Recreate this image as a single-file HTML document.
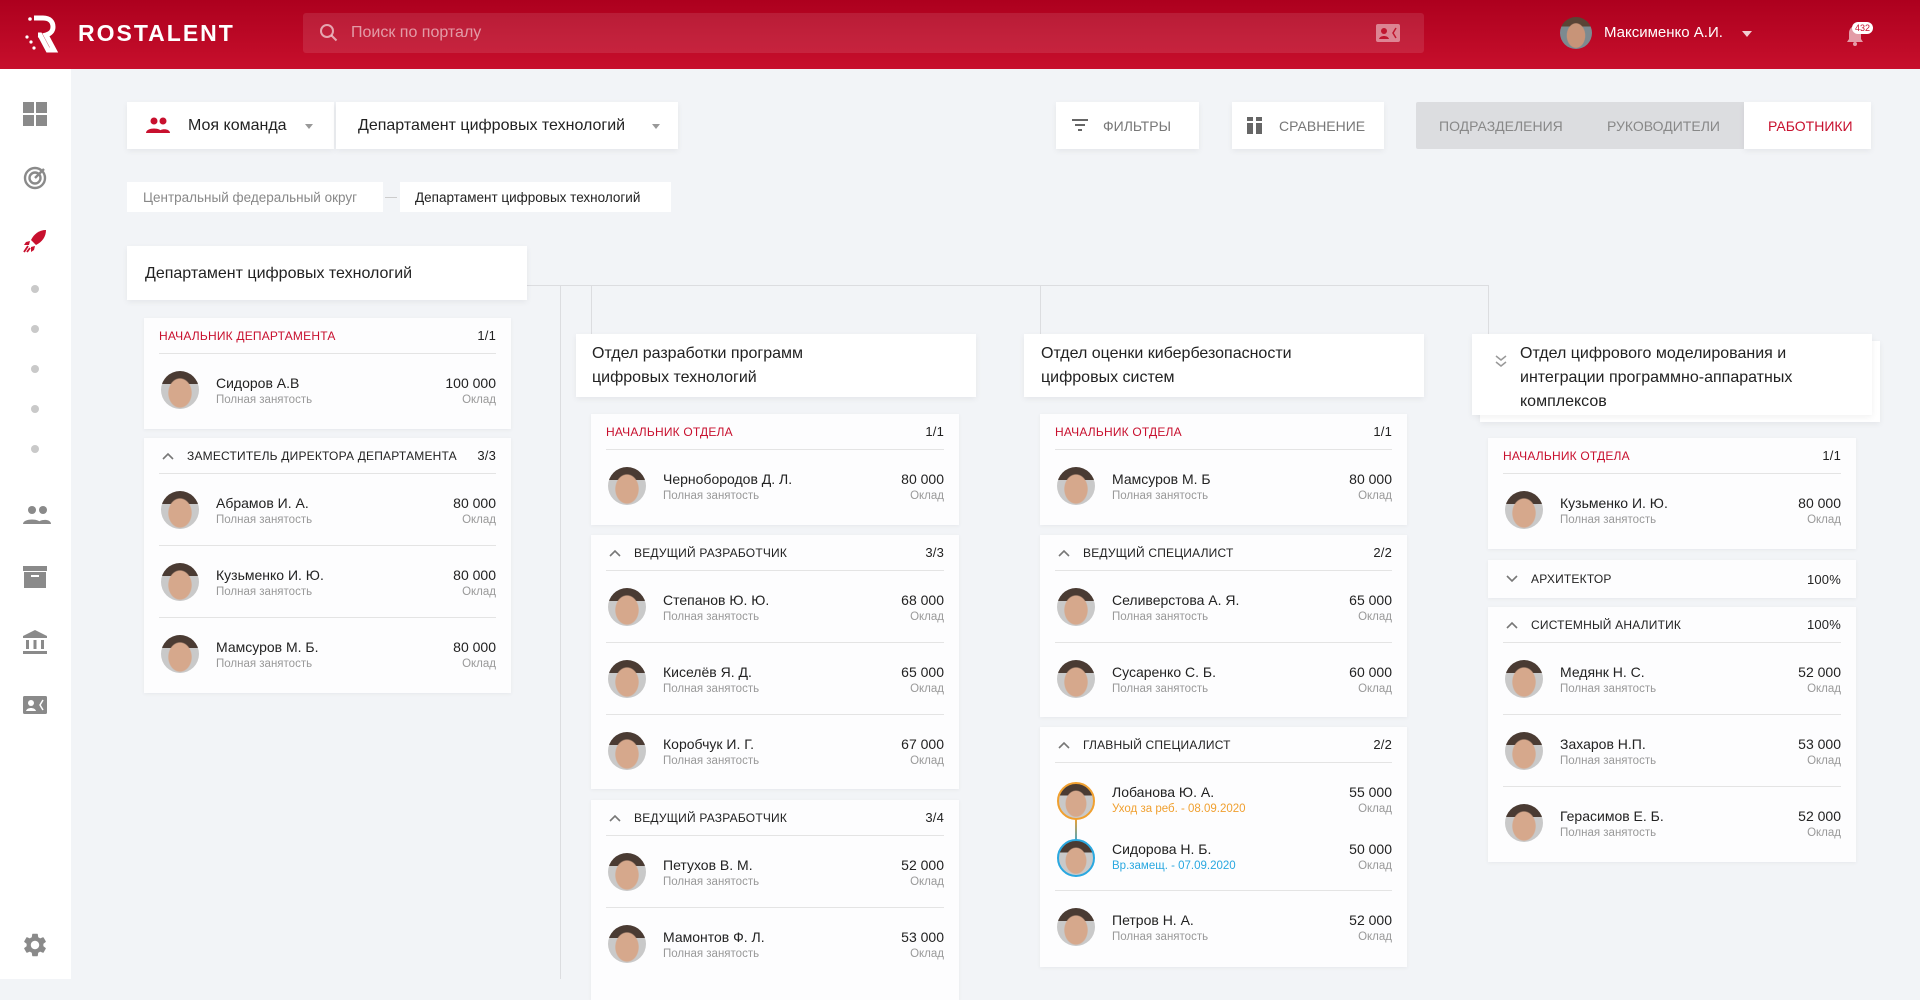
<!DOCTYPE html>
<html><head><meta charset="utf-8">
<style>
*{box-sizing:border-box;margin:0;padding:0}
body{width:1920px;height:979px;overflow:hidden;background:#f2f4f7;font-family:"Liberation Sans","Noto Sans CJK SC",sans-serif;color:#222;position:relative}
.hdr{position:absolute;left:0;top:0;width:1920px;height:69px;background:linear-gradient(180deg,#ad001e,#c70f2c)}
.logo{position:absolute;left:78px;top:20px;color:#fff;font-weight:bold;font-size:23px;letter-spacing:2px}
.search{position:absolute;left:303px;top:13px;width:1121px;height:40px;background:rgba(255,255,255,.1);border-radius:3px}
.search span{position:absolute;left:48px;top:11px;color:rgba(255,255,255,.55);font-size:16px}
.side{position:absolute;left:0;top:69px;width:71px;height:910px;background:#fff}
.ico{position:absolute;left:23px}
.dot{position:absolute;left:31px;width:8px;height:8px;border-radius:50%;background:#c9c9c9}
.box{position:absolute;background:#fff;box-shadow:0 2px 6px rgba(0,0,0,.06)}
.card{position:absolute;background:#fdfdfe;box-shadow:0 1px 4px rgba(0,0,0,.05)}
.sh{height:36px;margin:0 15px;border-bottom:1px solid #e4e4e4;display:flex;align-items:center;font-size:12px;text-transform:uppercase;letter-spacing:.2px}
.sh .t{flex:1}
.sh .c{font-size:13px}
.red{color:#c8102e}
.chev{width:28px;padding-left:3px;display:flex;align-items:center}
.row{height:72px;margin:0 15px;position:relative;border-bottom:1px solid #e4e4e4}
.row:last-child{border-bottom:none}
.av{position:absolute;left:2px;top:17px;width:38px;height:38px;border-radius:50%;background:radial-gradient(ellipse 32% 40% at 50% 58%,#d6a88c 92%,transparent 100%),linear-gradient(#4a3b33 0 34%,#c9c9c9 34%)}
.nm{position:absolute;left:57px;top:21px;font-size:14px;color:#222}
.sb{position:absolute;left:57px;top:40px;font-size:11.5px;color:#999}
.am{position:absolute;right:0;top:21px;font-size:14px}
.ok{position:absolute;right:0;top:40px;font-size:11.5px;color:#999}
.ln{position:absolute;background:#dcdde0}
.dh{position:absolute;font-size:16px;line-height:24px}
</style></head><body>
<div class="hdr">
  <svg style="position:absolute;left:24px;top:15px" width="36" height="38" viewBox="0 0 36 38"><path d="M10 3h9c7 0 10 4 10 9 0 4-3 7-7 8l8 15h-6l-8-15h-2" fill="none" stroke="#fff" stroke-width="5"/><circle cx="6" cy="4" r="1.8" fill="#fff"/><circle cx="3" cy="22" r="1.6" fill="#fff"/><circle cx="7" cy="27" r="1.6" fill="#fff"/><circle cx="10" cy="33" r="1.6" fill="#fff"/></svg>
  <div class="logo">ROSTALENT</div>
  <div class="search"><svg style="position:absolute;left:16px;top:10px" width="20" height="20" viewBox="0 0 20 20"><circle cx="8" cy="8" r="6" fill="none" stroke="rgba(255,255,255,.6)" stroke-width="2"/><path d="M12.5 12.5l5 5" stroke="rgba(255,255,255,.6)" stroke-width="2"/></svg><span>Поиск по порталу</span>
  <svg style="position:absolute;left:1073px;top:10px" width="24" height="20" viewBox="0 0 24 20"><rect x="0" y="1" width="24" height="18" rx="2" fill="rgba(255,255,255,.45)"/><circle cx="8" cy="8" r="3" fill="#c0162f"/><path d="M3 16c1-4 9-4 10 0z" fill="#c0162f"/><path d="M20 5l-3 5 3 5" stroke="#c0162f" stroke-width="1.5" fill="none"/></svg></div>
  <div style="position:absolute;left:1560px;top:17px;width:32px;height:32px;border-radius:50%;background:radial-gradient(ellipse 30% 40% at 50% 58%,#c89478 92%,transparent 100%),linear-gradient(#5a4435 0 30%,#7c8a90 30%)"></div>
  <div style="position:absolute;left:1604px;top:24px;color:#fff;font-size:15px">Максименко А.И.</div>
  <div style="position:absolute;left:1742px;top:31px;width:0;height:0;border-left:5px solid transparent;border-right:5px solid transparent;border-top:6px solid rgba(255,255,255,.8)"></div>
  <svg style="position:absolute;left:1844px;top:22px" width="22" height="26" viewBox="0 0 22 26"><path d="M3 20h16l-2-3v-6c0-4-3-7-6-7s-6 3-6 7v6z" fill="rgba(255,255,255,.6)"/><circle cx="11" cy="22" r="2" fill="rgba(255,255,255,.6)"/></svg>
  <div style="position:absolute;left:1852px;top:22px;background:#fff;color:#c8102e;font-size:9px;padding:1px 3px;border-radius:6px">432</div>
</div>
<div class="side">
  <svg class="ico" style="top:33px" width="24" height="24" viewBox="0 0 24 24"><rect x="0" y="0" width="11" height="11" fill="#8a8a8a"/><rect x="13" y="0" width="11" height="11" fill="#8a8a8a"/><rect x="0" y="13" width="11" height="11" fill="#8a8a8a"/><rect x="13" y="13" width="11" height="11" fill="#8a8a8a"/></svg>
  <svg class="ico" style="top:97px" width="24" height="24" viewBox="0 0 24 24"><circle cx="12" cy="12" r="10" fill="none" stroke="#8a8a8a" stroke-width="2.4"/><circle cx="12" cy="12" r="5.5" fill="none" stroke="#8a8a8a" stroke-width="2.4"/><path d="M12 12l9-9" stroke="#8a8a8a" stroke-width="2.4"/></svg>
  <svg class="ico" style="top:160px" width="24" height="24" viewBox="0 0 24 24"><path d="M23 1c-7 0-12 4-15 10l5 5c6-3 10-8 10-15z" fill="#c8102e"/><path d="M7 12l-4 1-2 3 5 0zM12 17l-1 4-3 2 0-5z" fill="#c8102e"/><path d="M5 17l-4 6M7 19l-3 4" stroke="#c8102e" stroke-width="1.8"/></svg>
  <div class="dot" style="top:216px"></div><div class="dot" style="top:256px"></div><div class="dot" style="top:296px"></div><div class="dot" style="top:336px"></div><div class="dot" style="top:376px"></div>
  <svg class="ico" style="top:436px" width="28" height="20" viewBox="0 0 28 20"><circle cx="9" cy="5" r="4" fill="#8a8a8a"/><circle cx="20" cy="5" r="4" fill="#8a8a8a"/><path d="M0 19c0-6 18-6 18 0zM14 19c1-5 14-6 14 0z" fill="#8a8a8a"/></svg>
  <svg class="ico" style="top:497px" width="24" height="22" viewBox="0 0 24 22"><rect x="0" y="0" width="24" height="5" fill="#8a8a8a"/><rect x="1" y="6" width="22" height="16" fill="#8a8a8a"/><rect x="8" y="9" width="8" height="2" fill="#fff"/></svg>
  <svg class="ico" style="top:561px" width="24" height="24" viewBox="0 0 24 24"><path d="M12 0l12 6v2H0V6z" fill="#8a8a8a"/><rect x="3" y="10" width="3" height="9" fill="#8a8a8a"/><rect x="10.5" y="10" width="3" height="9" fill="#8a8a8a"/><rect x="18" y="10" width="3" height="9" fill="#8a8a8a"/><rect x="0" y="21" width="24" height="3" fill="#8a8a8a"/></svg>
  <svg class="ico" style="top:627px" width="24" height="18" viewBox="0 0 24 18"><rect x="0" y="0" width="24" height="18" rx="1.5" fill="#8a8a8a"/><circle cx="8" cy="7" r="3" fill="#fff"/><path d="M3 15c1-4 9-4 10 0z" fill="#fff"/><path d="M20 4l-3 5 3 5" stroke="#fff" stroke-width="1.5" fill="none"/></svg>
  <svg class="ico" style="top:862px;left:21px" width="28" height="28" viewBox="0 0 24 24"><path fill="#8a8a8a" d="M19.14 12.94c.04-.3.06-.61.06-.94 0-.32-.02-.64-.07-.94l2.03-1.58c.18-.14.23-.41.12-.61l-1.92-3.32c-.12-.22-.37-.29-.59-.22l-2.39.96c-.5-.38-1.03-.7-1.62-.94l-.36-2.54c-.04-.24-.24-.41-.48-.41h-3.84c-.24 0-.43.17-.47.41l-.36 2.54c-.59.24-1.13.57-1.62.94l-2.39-.96c-.22-.08-.47 0-.59.22L2.74 8.87c-.12.21-.08.47.12.61l2.03 1.58c-.05.3-.09.63-.09.94s.02.64.07.94l-2.03 1.58c-.18.14-.23.41-.12.61l1.92 3.32c.12.22.37.29.59.22l2.39-.96c.5.38 1.03.7 1.62.94l.36 2.54c.05.24.24.41.48.41h3.84c.24 0 .44-.17.47-.41l.36-2.54c.59-.24 1.13-.56 1.62-.94l2.39.96c.22.08.47 0 .59-.22l1.920-3.32c.12-.22.07-.47-.12-.61l-2.01-1.58zM12 15.6c-1.98 0-3.6-1.62-3.6-3.6s1.62-3.6 3.6-3.6 3.6 1.62 3.6 3.6-1.62 3.6-3.6 3.6z"/></svg>
</div>

<!-- controls -->
<div class="box" style="left:127px;top:102px;width:207px;height:47px">
  <svg style="position:absolute;left:19px;top:15px" width="24" height="17" viewBox="0 0 24 17"><circle cx="8" cy="4" r="3.5" fill="#c8102e"/><circle cx="17" cy="4" r="3.5" fill="#c8102e"/><path d="M0 16c0-6 16-6 16 0zM12 16c1-5 12-5 12 0z" fill="#c8102e"/></svg>
  <div style="position:absolute;left:61px;top:15px;font-size:16px">Моя команда</div>
  <div style="position:absolute;left:178px;top:22px;border-left:4px solid transparent;border-right:4px solid transparent;border-top:5px solid #999"></div>
</div>
<div class="box" style="left:336px;top:102px;width:342px;height:47px">
  <div style="position:absolute;left:22px;top:15px;font-size:16px">Департамент цифровых технологий</div>
  <div style="position:absolute;left:316px;top:22px;border-left:4px solid transparent;border-right:4px solid transparent;border-top:5px solid #999"></div>
</div>
<div class="box" style="left:1056px;top:102px;width:143px;height:47px">
  <svg style="position:absolute;left:16px;top:17px" width="16" height="13" viewBox="0 0 16 13"><rect x="0" y="0" width="16" height="2" fill="#666"/><rect x="3" y="5" width="10" height="2" fill="#666"/><rect x="6" y="10" width="4" height="2" fill="#666"/></svg>
  <div style="position:absolute;left:47px;top:16px;font-size:14px;color:#777">ФИЛЬТРЫ</div>
</div>
<div class="box" style="left:1232px;top:102px;width:152px;height:47px">
  <svg style="position:absolute;left:15px;top:15px" width="16" height="17" viewBox="0 0 16 17"><rect x="0" y="0" width="6" height="4" fill="#666"/><rect x="9" y="0" width="6" height="4" fill="#666"/><rect x="0" y="6" width="6" height="11" fill="#666"/><rect x="9" y="6" width="6" height="11" fill="#666"/></svg>
  <div style="position:absolute;left:47px;top:16px;font-size:14px;color:#777">СРАВНЕНИЕ</div>
</div>
<div style="position:absolute;left:1416px;top:102px;width:330px;height:47px;background:#dcdde0;border-radius:2px">
  <div style="position:absolute;left:23px;top:16px;font-size:14px;color:#888">ПОДРАЗДЕЛЕНИЯ</div>
  <div style="position:absolute;left:191px;top:16px;font-size:14px;color:#888">РУКОВОДИТЕЛИ</div>
</div>
<div class="box" style="left:1744px;top:102px;width:127px;height:47px"><div style="position:absolute;left:24px;top:16px;font-size:14px;color:#c8102e">РАБОТНИКИ</div></div>

<!-- breadcrumbs -->
<div class="box" style="left:127px;top:182px;width:256px;height:30px;box-shadow:none"><div style="position:absolute;left:16px;top:8px;font-size:13.5px;color:#888">Центральный федеральный округ</div></div>
<div style="position:absolute;left:385px;top:197px;width:12px;height:1px;background:#ccc"></div>
<div class="box" style="left:400px;top:182px;width:271px;height:30px;box-shadow:none"><div style="position:absolute;left:15px;top:8px;font-size:13.5px">Департамент цифровых технологий</div></div>

<!-- tree lines -->
<div class="ln" style="left:527px;top:285px;width:962px;height:1px"></div>
<div class="ln" style="left:560px;top:285px;width:1px;height:694px"></div>
<div class="ln" style="left:591px;top:285px;width:1px;height:50px"></div>
<div class="ln" style="left:1040px;top:285px;width:1px;height:50px"></div>
<div class="ln" style="left:1488px;top:285px;width:1px;height:50px"></div>

<!-- dept header -->
<div class="box" style="left:127px;top:246px;width:400px;height:54px"><div class="dh" style="left:18px;top:16px">Департамент цифровых технологий</div></div>

<!-- column 1 -->
<div class="card" style="left:144px;top:318px;width:367px;height:111px">
  <div class="sh"><span class="t red">Начальник департамента</span><span class="c">1/1</span></div>
  <div class="row"><div class="av"></div><div class="nm">Сидоров А.В</div><div class="sb">Полная занятость</div><div class="am">100 000</div><div class="ok">Оклад</div></div>
</div>
<div class="card" style="left:144px;top:438px;width:367px;height:255px">
  <div class="sh"><span class="chev"><svg width="12" height="8" viewBox="0 0 12 8"><path d="M1 7l5-5 5 5" stroke="#777" stroke-width="1.6" fill="none"/></svg></span><span class="t">Заместитель директора департамента</span><span class="c">3/3</span></div>
  <div class="row"><div class="av"></div><div class="nm">Абрамов И. А.</div><div class="sb">Полная занятость</div><div class="am">80 000</div><div class="ok">Оклад</div></div>
  <div class="row"><div class="av"></div><div class="nm">Кузьменко И. Ю.</div><div class="sb">Полная занятость</div><div class="am">80 000</div><div class="ok">Оклад</div></div>
  <div class="row"><div class="av"></div><div class="nm">Мамсуров М. Б.</div><div class="sb">Полная занятость</div><div class="am">80 000</div><div class="ok">Оклад</div></div>
</div>

<!-- column 2 -->
<div class="box" style="left:576px;top:334px;width:400px;height:63px"><div class="dh" style="left:16px;top:8px">Отдел разработки программ<br>цифровых технологий</div></div>
<div class="card" style="left:591px;top:414px;width:368px;height:111px">
  <div class="sh"><span class="t red">Начальник отдела</span><span class="c">1/1</span></div>
  <div class="row"><div class="av"></div><div class="nm">Чернобородов Д. Л.</div><div class="sb">Полная занятость</div><div class="am">80 000</div><div class="ok">Оклад</div></div>
</div>
<div class="card" style="left:591px;top:535px;width:368px;height:254px">
  <div class="sh"><span class="chev"><svg width="12" height="8" viewBox="0 0 12 8"><path d="M1 7l5-5 5 5" stroke="#777" stroke-width="1.6" fill="none"/></svg></span><span class="t">Ведущий разработчик</span><span class="c">3/3</span></div>
  <div class="row"><div class="av"></div><div class="nm">Степанов Ю. Ю.</div><div class="sb">Полная занятость</div><div class="am">68 000</div><div class="ok">Оклад</div></div>
  <div class="row"><div class="av"></div><div class="nm">Киселёв Я. Д.</div><div class="sb">Полная занятость</div><div class="am">65 000</div><div class="ok">Оклад</div></div>
  <div class="row"><div class="av"></div><div class="nm">Коробчук И. Г.</div><div class="sb">Полная занятость</div><div class="am">67 000</div><div class="ok">Оклад</div></div>
</div>
<div class="card" style="left:591px;top:800px;width:368px;height:200px">
  <div class="sh"><span class="chev"><svg width="12" height="8" viewBox="0 0 12 8"><path d="M1 7l5-5 5 5" stroke="#777" stroke-width="1.6" fill="none"/></svg></span><span class="t">Ведущий разработчик</span><span class="c">3/4</span></div>
  <div class="row"><div class="av"></div><div class="nm">Петухов В. М.</div><div class="sb">Полная занятость</div><div class="am">52 000</div><div class="ok">Оклад</div></div>
  <div class="row"><div class="av"></div><div class="nm">Мамонтов Ф. Л.</div><div class="sb">Полная занятость</div><div class="am">53 000</div><div class="ok">Оклад</div></div>
</div>

<!-- column 3 -->
<div class="box" style="left:1024px;top:334px;width:400px;height:63px"><div class="dh" style="left:17px;top:8px">Отдел оценки кибербезопасности<br>цифровых систем</div></div>
<div class="card" style="left:1040px;top:414px;width:367px;height:111px">
  <div class="sh"><span class="t red">Начальник отдела</span><span class="c">1/1</span></div>
  <div class="row"><div class="av"></div><div class="nm">Мамсуров М. Б</div><div class="sb">Полная занятость</div><div class="am">80 000</div><div class="ok">Оклад</div></div>
</div>
<div class="card" style="left:1040px;top:535px;width:367px;height:182px">
  <div class="sh"><span class="chev"><svg width="12" height="8" viewBox="0 0 12 8"><path d="M1 7l5-5 5 5" stroke="#777" stroke-width="1.6" fill="none"/></svg></span><span class="t">Ведущий специалист</span><span class="c">2/2</span></div>
  <div class="row"><div class="av"></div><div class="nm">Селиверстова А. Я.</div><div class="sb">Полная занятость</div><div class="am">65 000</div><div class="ok">Оклад</div></div>
  <div class="row"><div class="av"></div><div class="nm">Сусаренко С. Б.</div><div class="sb">Полная занятость</div><div class="am">60 000</div><div class="ok">Оклад</div></div>
</div>
<div class="card" style="left:1040px;top:727px;width:367px;height:240px">
  <div class="sh"><span class="chev"><svg width="12" height="8" viewBox="0 0 12 8"><path d="M1 7l5-5 5 5" stroke="#777" stroke-width="1.6" fill="none"/></svg></span><span class="t">Главный специалист</span><span class="c">2/2</span></div>
  <div class="row" style="height:128px">
    <div style="position:absolute;left:20px;top:56px;width:2px;height:26px;background:linear-gradient(#f0a030,#2aa8e0)"></div>
    <div class="av" style="top:19px;border:2px solid #f0a030"></div>
    <div class="nm" style="top:21px">Лобанова Ю. А.</div><div class="sb" style="top:40px;color:#f0a030">Уход за реб. - 08.09.2020</div><div class="am" style="top:21px">55 000</div><div class="ok" style="top:40px">Оклад</div>
    <div class="av" style="top:76px;border:2px solid #2aa8e0"></div>
    <div class="nm" style="top:78px">Сидорова Н. Б.</div><div class="sb" style="top:97px;color:#2aa8e0">Вр.замещ. - 07.09.2020</div><div class="am" style="top:78px">50 000</div><div class="ok" style="top:97px">Оклад</div>
  </div>
  <div class="row"><div class="av"></div><div class="nm">Петров Н. А.</div><div class="sb">Полная занятость</div><div class="am">52 000</div><div class="ok">Оклад</div></div>
</div>

<!-- column 4 -->
<div class="box" style="left:1480px;top:341px;width:400px;height:81px"></div>
<div class="box" style="left:1472px;top:334px;width:400px;height:81px">
  <svg style="position:absolute;left:22px;top:20px" width="14" height="14" viewBox="0 0 14 14"><path d="M2 2l5 4 5-4M2 8l5 4 5-4" fill="none" stroke="#999" stroke-width="1.5"/></svg>
  <div class="dh" style="left:48px;top:8px">Отдел цифрового моделирования и<br>интеграции программно-аппаратных<br>комплексов</div>
</div>
<div class="card" style="left:1488px;top:438px;width:368px;height:111px">
  <div class="sh"><span class="t red">Начальник отдела</span><span class="c">1/1</span></div>
  <div class="row"><div class="av"></div><div class="nm">Кузьменко И. Ю.</div><div class="sb">Полная занятость</div><div class="am">80 000</div><div class="ok">Оклад</div></div>
</div>
<div class="card" style="left:1488px;top:560px;width:368px;height:38px">
  <div class="sh" style="border:none;height:38px"><span class="chev"><svg width="12" height="8" viewBox="0 0 12 8"><path d="M1 1l5 5 5-5" stroke="#777" stroke-width="1.6" fill="none"/></svg></span><span class="t">Архитектор</span><span class="c">100%</span></div>
</div>
<div class="card" style="left:1488px;top:607px;width:368px;height:255px">
  <div class="sh"><span class="chev"><svg width="12" height="8" viewBox="0 0 12 8"><path d="M1 7l5-5 5 5" stroke="#777" stroke-width="1.6" fill="none"/></svg></span><span class="t">Системный аналитик</span><span class="c">100%</span></div>
  <div class="row"><div class="av"></div><div class="nm">Медянк Н. С.</div><div class="sb">Полная занятость</div><div class="am">52 000</div><div class="ok">Оклад</div></div>
  <div class="row"><div class="av"></div><div class="nm">Захаров Н.П.</div><div class="sb">Полная занятость</div><div class="am">53 000</div><div class="ok">Оклад</div></div>
  <div class="row"><div class="av"></div><div class="nm">Герасимов Е. Б.</div><div class="sb">Полная занятость</div><div class="am">52 000</div><div class="ok">Оклад</div></div>
</div>
</body></html>
